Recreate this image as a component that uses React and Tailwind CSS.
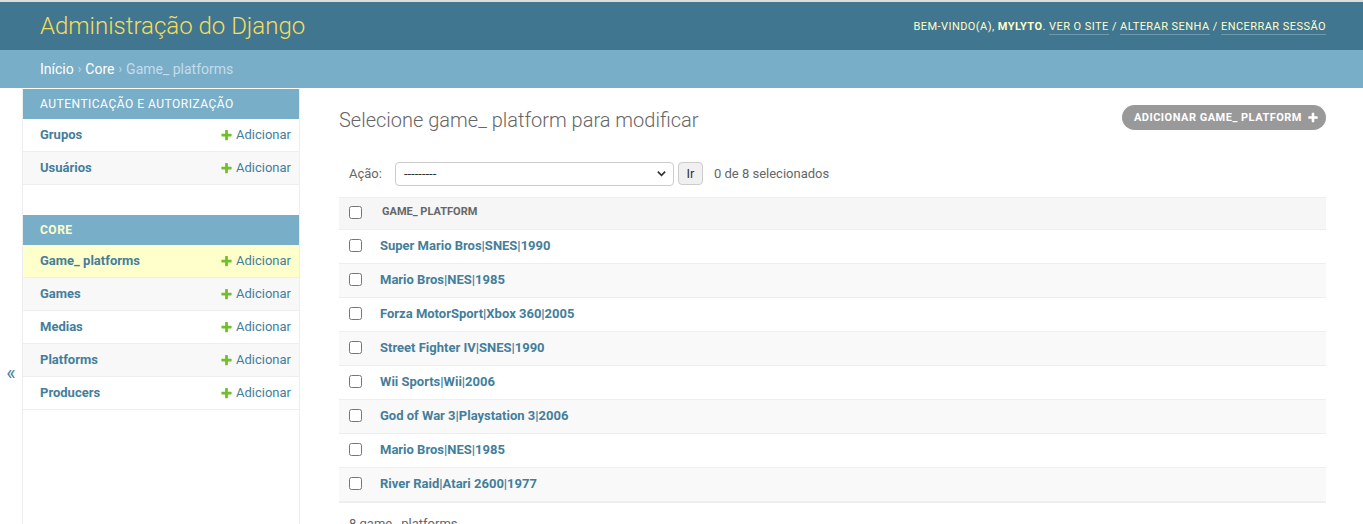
import React from "react";

const PlusIcon = ({ className = "", color = "#70bf2b" }) => (
  <svg viewBox="0 0 1792 1792" className={className} aria-hidden="true">
    <path
      fill={color}
      d="M1600 736v192q0 40-28 68t-68 28h-416v416q0 40-28 68t-68 28h-192q-40 0-68-28t-28-68v-416h-416q-40 0-68-28t-28-68v-192q0-40 28-68t68-28h416v-416q0-40 28-68t68-28h192q40 0 68 28t28 68v416h416q40 0 68 28t28 68z"
    />
  </svg>
);

function SideRow({ label, bg }) {
  return (
    <div className={`flex h-[33px] items-center justify-between border-b border-[#eeeeee] pl-[17px] pr-[8px] ${bg}`}>
      <span className="text-[13px] font-bold text-[#447e9b]">{label}</span>
      <span className="flex items-center gap-[3px] text-[13px] text-[#447e9b]">
        <PlusIcon className="h-[13px] w-[13px]" />
        Adicionar
      </span>
    </div>
  );
}

const rows = [
  "Super Mario Bros|SNES|1990",
  "Mario Bros|NES|1985",
  "Forza MotorSport|Xbox 360|2005",
  "Street Fighter IV|SNES|1990",
  "Wii Sports|Wii|2006",
  "God of War 3|Playstation 3|2006",
  "Mario Bros|NES|1985",
  "River Raid|Atari 2600|1977",
];

export default function App() {
  return (
    <div className="min-h-[524px] bg-white font-[Roboto,'Liberation_Sans',sans-serif] text-[#333]">
      {/* header */}
      <div className="border-t-2 border-[#dcdcdc] bg-[#417690]">
        <div className="flex h-[48px] items-center justify-between pl-[40px] pr-[37px]">
          <div className="text-[24px] font-light leading-none text-[#f5dd5d]">Administração do Django</div>
          <div className="pt-[2px] text-[11px] uppercase tracking-[0.45px] text-[#ffffcc]">
            Bem-vindo(a), <strong className="font-bold">mylyto</strong>.{" "}
            <a className="border-b border-white/25 pb-[1px]">Ver o site</a> /{" "}
            <a className="border-b border-white/25 pb-[1px]">Alterar senha</a> /{" "}
            <a className="border-b border-white/25 pb-[1px]">Encerrar sessão</a>
          </div>
        </div>
      </div>
      {/* breadcrumbs */}
      <div className="flex h-[38px] items-center bg-[#79aec8] pl-[40px] text-[14px] text-[#c4dce8]">
        <a className="text-white">Início</a>
        <span className="mx-[4px] text-[12px]">›</span>
        <a className="text-white">Core</a>
        <span className="mx-[4px] text-[12px]">›</span>
        <span>Game_ platforms</span>
      </div>
      {/* body */}
      <div className="flex min-h-[436px] items-stretch">
        <div className="flex w-[23px] shrink-0 flex-col items-center border-r border-[#eeeeee] pt-[275px]">
          <span className="text-[20px] leading-none text-[#447e9b]">«</span>
        </div>
        <div className="w-[277px] shrink-0 border-r border-[#eeeeee] pt-px">
          <div className="mb-[30px]">
            <div className="flex h-[30px] items-center bg-[#79aec8] pl-[17px] text-[12px] uppercase tracking-[0.5px] text-white">
              Autenticação e Autorização
            </div>
            <SideRow label="Grupos" bg="bg-white" />
            <SideRow label="Usuários" bg="bg-[#f8f8f8]" />
          </div>
          <div>
            <div className="flex h-[30px] items-center bg-[#79aec8] pl-[17px] text-[12px] font-bold uppercase tracking-[0.5px] text-[#ffffcc]">
              Core
            </div>
            <SideRow label="Game_ platforms" bg="bg-[#ffffcc]" />
            <SideRow label="Games" bg="bg-[#f8f8f8]" />
            <SideRow label="Medias" bg="bg-white" />
            <SideRow label="Platforms" bg="bg-[#f8f8f8]" />
            <SideRow label="Producers" bg="bg-white" />
          </div>
        </div>
        {/* main */}
        <div className="min-w-0 flex-1 pl-[39px] pr-[37px] pt-[20px]">
          <div className="flex items-start justify-between">
            <h1 className="text-[20px] font-light leading-[24px] text-[#666]">
              Selecione game_ platform para modificar
            </h1>
            <a className="-mt-[3px] flex h-[25px] items-center gap-[5px] rounded-[15px] bg-[#999999] pl-[12px] pr-[7px] pt-px text-[11px] font-bold uppercase tracking-[0.5px] text-white">
              Adicionar game_ platform
              <PlusIcon className="h-[12px] w-[12px]" color="#ffffff" />
            </a>
          </div>
          <div className="mt-[20px] flex h-[45px] items-center pb-[2px] pl-[10px] text-[13px]">
            <span className="text-[#666]">Ação:</span>
            <div className="ml-[13px] flex h-[24px] w-[279px] items-center justify-between rounded-[4px] border border-[#cccccc] bg-white pl-[8px] pr-[6px]">
              <span className="text-[13px] leading-none text-[#333]">---------</span>
              <svg viewBox="0 0 12 12" className="h-[11px] w-[11px]">
                <path d="M2 4 L6 8 L10 4" fill="none" stroke="#333" strokeWidth="1.8" />
              </svg>
            </div>
            <button className="ml-[4px] flex h-[23px] w-[25px] items-center justify-center rounded-[4px] border border-[#cccccc] bg-[#f0f0f0] text-[13px] text-[#333]">
              Ir
            </button>
            <span className="ml-[11px] text-[13px] text-[#666]">0 de 8 selecionados</span>
          </div>
          <div>
            <div className="flex h-[33px] items-center border-y border-[#eeeeee] bg-[#f6f6f6] pb-[2px] pl-[10px]">
              <input type="checkbox" className="m-0 h-[13px] w-[13px]" readOnly />
              <span className="ml-[20px] text-[11px] font-bold uppercase text-[#666]">Game_ platform</span>
            </div>
            {rows.map((r, i) => (
              <div
                key={i}
                className={`flex h-[34px] items-center border-b border-[#eeeeee] pb-[2px] pl-[10px] ${i % 2 === 1 ? "bg-[#f9f9f9]" : "bg-white"}`}
              >
                <input type="checkbox" className="m-0 h-[13px] w-[13px]" readOnly />
                <a className="ml-[18px] text-[13px] font-bold text-[#447e9b]">{r}</a>
              </div>
            ))}
            <div className="border-t border-[#eeeeee] pl-[10px] pt-[10px] text-[13px] leading-[22px] text-[#666]">
              8 game_ platforms
            </div>
          </div>
        </div>
      </div>
    </div>
  );
}
